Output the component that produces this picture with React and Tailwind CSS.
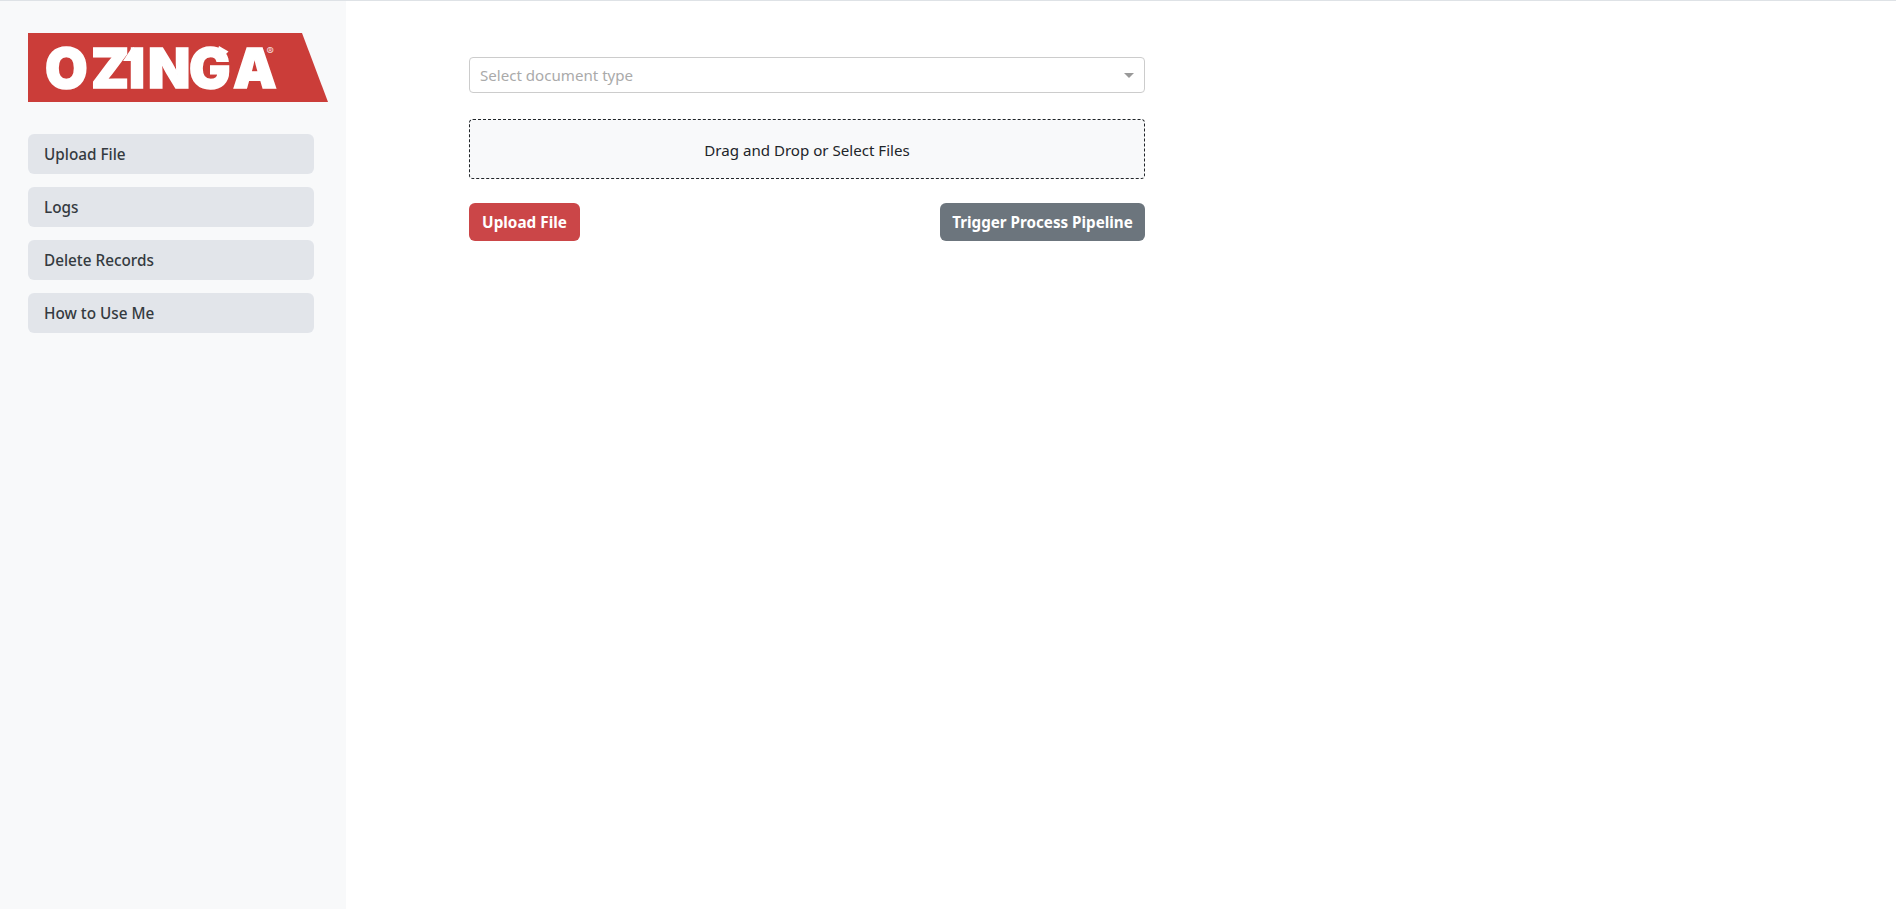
const navItems = ["Upload File", "Logs", "Delete Records", "How to Use Me"];

// wordmark stays real text, only the banner and the little flag/arrow are shapes
const OzingaLogo = () => (
  <svg width="301" height="69" viewBox="0 0 301 69" className="block">
    <polygon points="0,0 274,0 300,69 0,69" fill="#cb3d39" />
    <text
      x="17 63 101 120 161 205"
      y="55"
      className="fill-white stroke-white stroke-[1.5px] font-['Inter',sans-serif] font-black text-[55px]"
    >
      OZINGA
      <tspan x="238.500" y="22" className="stroke-0 font-normal text-[11px] opacity-80">
        ®
      </tspan>
    </text>
    {/* flag on the I */}
    <polygon points="103,16 106,14 103,28 95,28" fill="#ffffff" />
    {/* arrow on the G */}
    <polygon points="191,13 200.500,18.500 194,25 188,22" fill="#ffffff" />
  </svg>
);

const App = () => {
  return (
    <div className="h-[909px] flex flex-col bg-white font-['Noto_Sans',sans-serif] text-[#212529] overflow-hidden">
      <div className="h-px bg-[#dee2e6]" />
      <div className="flex flex-1">
        <aside className="w-[346px] bg-[#f8f9fa] pl-[28px] pt-[32px]">
          <OzingaLogo />
          <nav className="mt-[32px] flex flex-col gap-[13px] w-[286px]">
            {navItems.map((item) => (
              <a
                key={item}
                className="h-[40px] flex items-center pl-[16px] pt-[1px] rounded-md bg-[#e2e5ea] text-[15.300px] font-medium text-[#343a40]"
              >
                {item}
              </a>
            ))}
          </nav>
        </aside>

        <main className="pl-[123px] pt-[56px] w-[800px]">
          <div className="w-[676px]">
            <div className="h-[36px] flex items-center justify-between bg-white border border-[#cccccc] rounded pl-[10px] pr-[10px]">
              <span className="text-[15.100px] text-[#aaaaaa]">Select document type</span>
              <span className="w-0 h-0 border-x-[5px] border-x-transparent border-t-[5px] border-t-[#999999]" />
            </div>

            <div className="mt-[26px] h-[60px] pt-[2px] flex items-center justify-center bg-[#f8f9fa] border border-dashed border-[#212529] rounded text-[15.100px]">
              Drag and Drop or Select Files
            </div>

            <div className="mt-[24px] flex justify-between">
              <button className="h-[38px] w-[111px] pt-[1px] rounded-md bg-[#cb4648] text-white text-[15.300px] font-bold">
                Upload File
              </button>
              <button className="h-[38px] w-[205px] pt-[1px] rounded-md bg-[#6c757d] text-white text-[15.200px] font-bold">
                Trigger Process Pipeline
              </button>
            </div>
          </div>
        </main>
      </div>
    </div>
  );
};

export default App;
